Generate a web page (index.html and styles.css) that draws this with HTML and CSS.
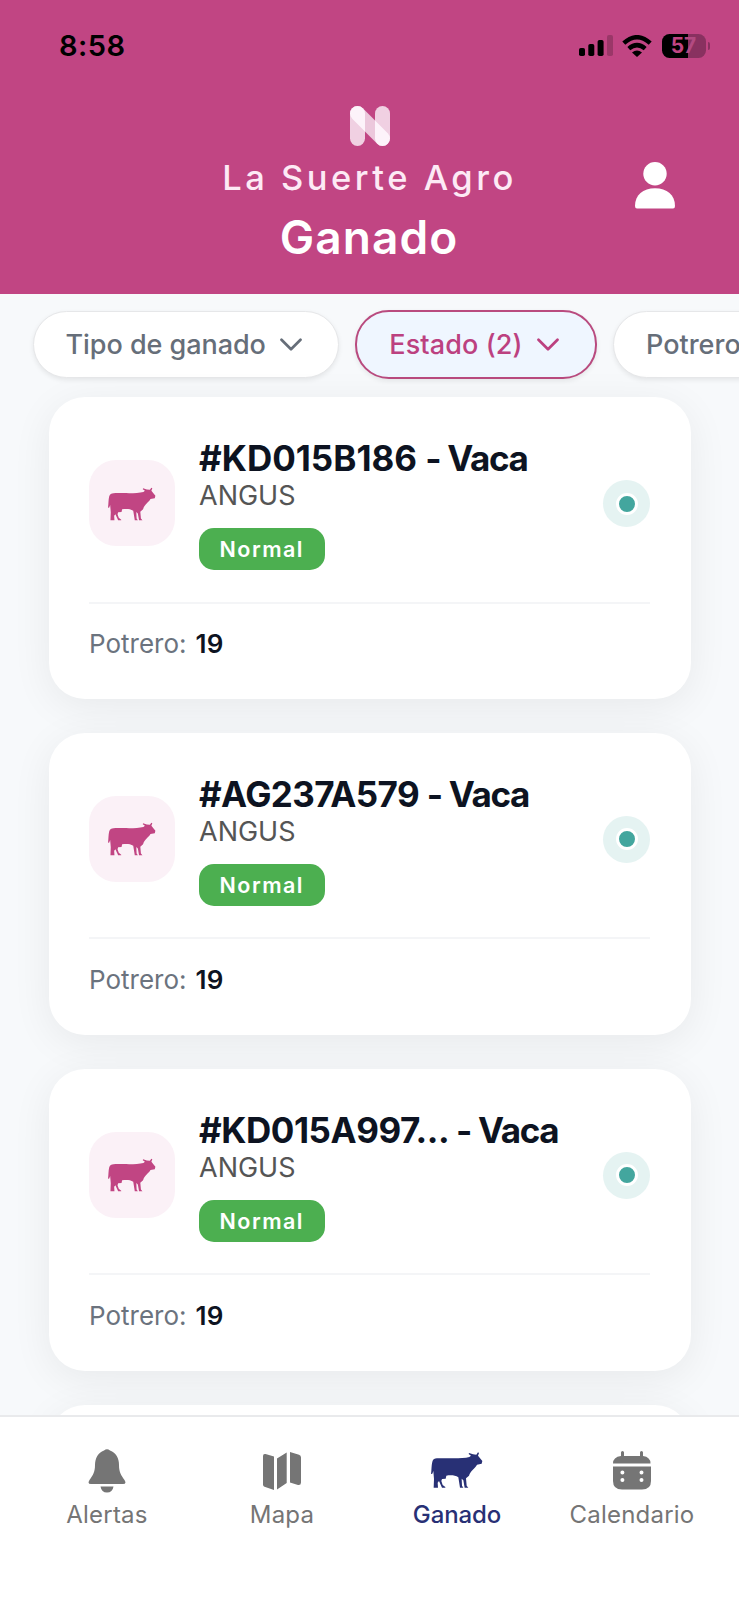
FILE: index.html
```html
<!DOCTYPE html>
<html lang="es">
<head>
<meta charset="utf-8">
<title>Ganado</title>
<link rel="stylesheet" href="styles.css">
</head>
<body>
<svg width="0" height="0" class="defs">
  <symbol id="cow" viewBox="129 67 156 108"><path d="M147 86C166 84 218 89 244 82L249 78L242 73L243 70L255 74L265 75L270 68L273 70L270 78L283 94L281 102L267 105C262 115 247 123 243 138L234 146L236 168L241 174H230L226 152L221 147L222 168L226 174H216L211 143C200 135 184 137 175 138L173 147L162 148L160 154L164 166L172 172V174H162L153 154L149 159L150 174H137L138 148L136 124L133 132L129 133C131 120 130 108 133 96C135 89 140 86 147 86Z"/></symbol>
  <symbol id="chev" viewBox="0 0 22 13"><path d="M1.5 1.7L11 11.2L20.500 1.700" fill="none" stroke="currentColor" stroke-width="2.700" stroke-linecap="round" stroke-linejoin="round"/></symbol>
</svg>
<div class="app">
  <header class="header">
    <div class="status">
      <span class="time">8:58</span>
      <div class="indicators">
        <svg class="signal" width="34" height="21" viewBox="0 0 34 21"><rect x="0" y="13" width="6" height="8" rx="1.800"/><rect x="9.300" y="9" width="6" height="12" rx="1.800"/><rect x="18.600" y="5" width="6" height="16" rx="1.800"/><rect x="28" y="0" width="6" height="21" rx="1.800" opacity=".2"/></svg>
        <svg class="wifi" width="30" height="22" viewBox="0 0 30 22" fill="none" stroke="#000" stroke-width="4.400"><path d="M1.800 8.200Q15-3.800 28.200 8.200"/><path d="M6.800 13.600Q15 6.600 23.200 13.600"/><path d="M10 17.600Q15 13.600 20 17.600L15 22Z" fill="#000" stroke="none"/></svg>
        <div class="battery"><span class="level"><span class="five">5</span><span class="seven">7</span></span><i class="cap"></i></div>
      </div>
    </div>
    <div class="brand-row">
      <div class="brand">
        <svg class="logo" width="40" height="40" viewBox="0 0 40 40"><rect width="15" height="40" rx="7.500" fill="#f0d0e2"/><rect x="25" width="15" height="40" rx="7.500" fill="#f0d0e2"/><path d="M7.500 7.500L32.500 32.500" stroke="#ecc8dc" stroke-width="15" stroke-linecap="round"/><clipPath id="posts"><rect width="15" height="40" rx="7.500"/><rect x="25" width="15" height="40" rx="7.500"/></clipPath><path clip-path="url(#posts)" d="M7.500 7.500L32.500 32.500" stroke="#fdf3fa" stroke-width="15" stroke-linecap="round"/></svg>
        <div class="farm">La Suerte Agro</div>
        <h1 class="title">Ganado</h1>
      </div>
      <svg class="user" width="40" height="47" viewBox="0 0 40 47" fill="#fff"><circle cx="20" cy="11.700" r="11.700"/><path d="M0 44C0 33 8 26.300 20 26.300S40 33 40 44Q40 46.500 38 46.500H2Q0 46.500 0 44Z"/></svg>
    </div>
  </header>
  <main class="main">
    <div class="filters">
      <div class="pill"><span class="t-tipo">Tipo de ganado</span><svg class="chev"><use href="#chev"/></svg></div>
      <div class="pill active"><span class="t-estado">Estado (2)</span><svg class="chev"><use href="#chev"/></svg></div>
      <div class="pill"><span class="t-potrero">Potrero</span><svg class="chev"><use href="#chev"/></svg></div>
    </div>
    <div class="list">
      <article class="card">
        <div class="top"><div class="tile"><svg class="cow"><use href="#cow"/></svg></div>
          <div class="info"><h2 class="name n1">#KD015B186 <span class="kind">- Vaca</span></h2><div class="breed">ANGUS</div><span class="badge">Normal</span></div>
          <div class="halo"><i class="dot"></i></div></div>
        <div class="foot"><span class="label">Potrero:</span><b>19</b></div>
      </article>
      <article class="card">
        <div class="top"><div class="tile"><svg class="cow"><use href="#cow"/></svg></div>
          <div class="info"><h2 class="name n2">#AG237A579 <span class="kind">- Vaca</span></h2><div class="breed">ANGUS</div><span class="badge">Normal</span></div>
          <div class="halo"><i class="dot"></i></div></div>
        <div class="foot"><span class="label">Potrero:</span><b>19</b></div>
      </article>
      <article class="card">
        <div class="top"><div class="tile"><svg class="cow"><use href="#cow"/></svg></div>
          <div class="info"><h2 class="name n3">#KD015A997... <span class="kind">- Vaca</span></h2><div class="breed">ANGUS</div><span class="badge">Normal</span></div>
          <div class="halo"><i class="dot"></i></div></div>
        <div class="foot"><span class="label">Potrero:</span><b>19</b></div>
      </article>
      <article class="card"></article>
    </div>
  </main>
  <nav class="nav">
    <a class="tab"><svg width="38" height="44" viewBox="0 0 38 44"><path d="M16 1.500Q19-.8 22 1.500C28 4 31 9 31 16C31 23 33 26 36.500 31Q39 35 35 35H3Q-1 35 1.500 31C5 26 7 23 7 16C7 9 10 4 16 1.500ZM12.500 37.500H25.500Q24.500 43.500 19 43.500T12.500 37.500Z"/></svg><span>Alertas</span></a>
    <a class="tab"><svg width="38" height="44" viewBox="0 0 38 44"><path d="M0 7Q0 4.500 2.500 5L11 7.500V41L1.500 37.800Q0 37.200 0 35.500ZM14 9.500L23.700 3.500V34L14 40.500ZM27 3L36 5.700Q38 6.300 38 8.500V33.500Q38 36.500 35 36L27 33.500Z"/></svg><span>Mapa</span></a>
    <a class="tab on"><svg class="navcow"><use href="#cow"/></svg><span>Ganado</span></a>
    <a class="tab"><svg width="38" height="44" viewBox="0 0 38 44"><path d="M8 7V3.500Q8 2 9.500 2T11 3.500V7H27V3.500Q27 2 28.500 2T30 3.500V7Q37.500 8 37.500 14.500H0Q0 8 8 7Z"/><path fill-rule="evenodd" d="M0 17.500H38V32Q38 40.500 29 40.500H9Q0 40.500 0 32ZM7.400 23.500a2 2 0 1 0 4 0a2 2 0 1 0-4 0M26.500 23.500a2 2 0 1 0 4 0a2 2 0 1 0-4 0M7.400 31a2 2 0 1 0 4 0a2 2 0 1 0-4 0M26.500 31a2 2 0 1 0 4 0a2 2 0 1 0-4 0"/></svg><span>Calendario</span></a>
  </nav>
</div>
</body>
</html>
```
FILE: styles.css
```css
*{box-sizing:border-box}
body{margin:0;font-family:Inter,"Liberation Sans",sans-serif}
.defs{position:absolute}
h1,h2{margin:0}
.app{width:739px;height:1600px;display:flex;flex-direction:column;overflow:hidden;background:#f7f9fb}
.header{height:294px;flex:none;background:#c14583;color:#fff}
.status{height:91px;padding:0 29px 0 59px;display:flex;align-items:center;justify-content:space-between;color:#000}
.time{font-size:29px;font-weight:600;letter-spacing:.500px}
.indicators{display:flex;align-items:center}
.signal{margin-right:9px}
.wifi{margin-right:10px}
.battery{display:flex;align-items:center;gap:2px}
.level{width:44px;height:24px;border-radius:7.500px;display:flex;align-items:center;justify-content:center;font-size:21px;font-weight:700;background:linear-gradient(90deg,#000 58%,#893160 58%)}
.five{color:#c14583}
.seven{color:#b24a81}
.cap{width:2.500px;height:8px;border-radius:0 3px 3px 0;background:#893160}
.brand-row{display:grid;grid-template-columns:104px 1fr 104px;padding-top:15px}
.brand{grid-column:2;display:flex;flex-direction:column;align-items:center}
.logo{display:block}
.farm{font-size:34.500px;line-height:42px;margin-top:11px;letter-spacing:3.500px;font-weight:500;color:#fdeaf5;white-space:nowrap}
.title{font-size:46px;line-height:56px;margin:10px 1px 0 0;font-weight:600;letter-spacing:1.100px}
.user{margin-top:56px}
.main{flex:1;min-height:0;overflow:hidden}
.filters{height:102px;padding:16px 0 0 32.500px;display:flex;align-items:flex-start;gap:16.500px;white-space:nowrap}
.pill{height:67px;flex:none;display:flex;align-items:center;padding:0 36px 0 32px;border-radius:34px;background:#fff;border:1px solid #e6e7e9;box-shadow:0 2px 5px rgba(0,0,0,.08);color:#666e79;font-size:27px;font-weight:500;gap:14px;margin-top:1px}
.t-tipo{letter-spacing:-.050px}
.t-estado{letter-spacing:.100px}
.active{height:69px;margin-top:0;background:#eff6ff;border:2px solid #b94b7f;color:#bc4180}
.chev{width:22px;height:13px;flex:none}
.list{padding:1px 48px 0 49px;display:flex;flex-direction:column;gap:33.800px}
.card{height:302.200px;flex:none;border-radius:36px;background:#fff;padding:40px 41px 0 40px;box-shadow:0 8px 40px rgba(0,0,0,.065)}
.top{height:166.500px;display:flex;align-items:flex-start;border-bottom:2px solid #f4f5f7}
.tile{width:86px;height:86px;border-radius:27px;margin-top:23px;background:#fbf1f7;color:#c14583;display:flex;align-items:center;justify-content:center}
.cow{width:48px;height:34px;margin:1px 0 0;fill:currentColor}
.info{flex:1;margin-left:24px;display:flex;flex-direction:column;align-items:flex-start;white-space:nowrap}
.name{font-size:35px;line-height:42px;font-weight:700;color:#0d1321}
.n1{letter-spacing:0}
.n2{letter-spacing:-.600px}
.n3{letter-spacing:-.450px}
.kind{letter-spacing:-1.350px}
.breed{font-size:27px;line-height:34px;color:#555;margin:0}
.badge{height:42px;width:125.500px;margin-top:15px;border-radius:15px;background:#4caf50;color:#fff;font-size:21.500px;line-height:42px;font-weight:600;letter-spacing:1.500px;text-align:center}
.halo{width:47px;height:47px;border-radius:50%;background:#e5f3f2;display:flex;align-items:center;justify-content:center;margin:43px 0 0}
.dot{width:22px;height:22px;border:3px solid #fff;border-radius:50%;background:#43a69e}
.foot{display:flex;gap:9px;margin-top:24.500px;font-size:26px;line-height:32px;color:#6b737e}
.foot b{font-weight:600;color:#0d1321;letter-spacing:.300px}
.nav{height:185px;flex:none;border-top:2px solid #e9eaec;background:#fff;display:grid;grid-template-columns:repeat(4,175px);padding:32px 0 0 19.500px}
.tab{display:flex;flex-direction:column;align-items:center;font-size:24px;line-height:30px;color:#757575;fill:currentColor;font-weight:400;letter-spacing:.200px;gap:7px}
.on{color:#283075;font-weight:500;letter-spacing:-.100px}
.navcow{width:52px;height:36px;margin:3px 0 5px}
```
